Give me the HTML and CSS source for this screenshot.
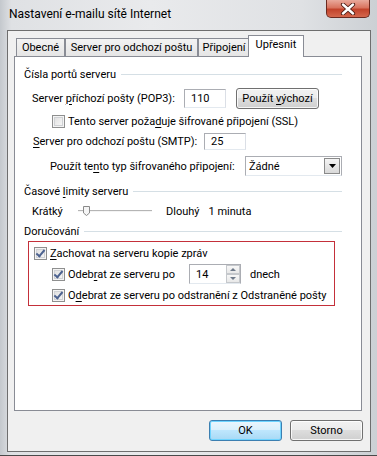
FILE: index.html
```html
<!DOCTYPE html>
<html lang="cs">
<head>
    <meta charset="UTF-8" />
    <title>Nastavení e-mailu sítě Internet</title>
    <link rel="stylesheet" href="styles.css">
</head>
<body>
    <div class="window">
        <div class="titlebar">
            <span class="title">Nastavení e-mailu sítě Internet</span>
            <span class="close">
                <svg width="16" height="12" viewBox="0 0 16 12">
                    <path d="M3 1.5 L13 10.5 M13 1.5 L3 10.5" stroke="#4a1a12" stroke-width="4.2" stroke-linecap="round" />
                    <path d="M3 1.5 L13 10.5 M13 1.5 L3 10.5" stroke="#ffffff" stroke-width="2.4" stroke-linecap="round" />
                </svg>
            </span>
        </div>

        <div class="client">
            <div class="tabs">
                <span class="tab t1">Obecné</span>
                <span class="tab t2">Server pro odchozí poštu</span>
                <span class="tab t3">Připojení</span>
                <span class="tab active">Upřesnit</span>
            </div>

            <div class="panel">
                <div class="group-head"><span>Čísla portů serveru</span></div>

                <div class="row pop3">
                    <span class="label w-pop3">Server <u>p</u>říchozí pošty (POP3):</span>
                    <span class="field f-pop3">110</span>
                    <span class="btn"><span>Použít <u>v</u>ýchozí</span></span>
                </div>

                <div class="row ssl">
                    <span class="check"></span>
                    <span>Tento server poža<u>d</u>uje šifrované připojení (SSL)</span>
                </div>

                <div class="row smtp">
                    <span class="label w-smtp"><u>S</u>erver pro odchozí poštu (SMTP):</span>
                    <span class="field f-smtp">25</span>
                </div>

                <div class="row enc">
                    <span class="label w-enc">Použít te<u>n</u>to typ šifrovaného připojení:</span>
                    <span class="select">
                        <span class="select-text">Žádné</span>
                        <span class="drop">
                            <svg width="7" height="4" viewBox="0 0 7 4"><path d="M0 0 H7 L3.5 4 Z" fill="#000" /></svg>
                        </span>
                    </span>
                </div>

                <div class="group-head head2"><span>Časové <u>l</u>imity serveru</span></div>

                <div class="row slider-row">
                    <span class="label w-short">Krátký</span>
                    <svg class="slider" width="74" height="12" viewBox="0 0 74 12">
                        <line x1="0" y1="5.5" x2="74" y2="5.5" stroke="#b5b5b5" />
                        <line x1="0" y1="6.5" x2="74" y2="6.5" stroke="#f4f4f4" />
                        <path d="M5.5 1.5 H11.5 V8 L8.5 10.5 L5.5 8 Z" fill="#f5f5f5" stroke="#8a8a8a" />
                    </svg>
                    <span class="long">Dlouhý</span>
                    <span class="minute">1 minuta</span>
                </div>

                <div class="group-head head3"><span>Doručování</span></div>

                <div class="highlight">
                    <div class="row keep">
                        <span class="check on"></span>
                        <span><u>Z</u>achovat na serveru kopie zpráv</span>
                    </div>
                    <div class="row days">
                        <span class="check on"></span>
                        <span class="w-days">Odeb<u>r</u>at ze serveru po</span>
                        <span class="spin">
                            <span class="spin-text">14</span>
                            <span class="spin-btns">
                                <span class="arrow up"></span>
                                <span class="arrow down"></span>
                            </span>
                        </span>
                        <span class="unit">dnech</span>
                    </div>
                    <div class="row deleted">
                        <span class="check on"></span>
                        <span>O<u>d</u>ebrat ze serveru po odstranění z Odstraněné pošty</span>
                    </div>
                </div>
            </div>

            <div class="buttons">
                <span class="btn default">OK</span>
                <span class="btn">Storno</span>
            </div>
        </div>
    </div>
</body>
</html>
```

FILE: styles.css
```css
body {
    margin: 0;
    font-family: Roboto, "Liberation Sans", sans-serif;
    font-size: 11px;
    color: #000;
    white-space: nowrap;
}
u {
    text-decoration-thickness: 1px;
    text-underline-offset: 2px;
}
.window {
    width: 377px;
    height: 456px;
    box-sizing: border-box;
    padding: 0 6px 3px 7px;
    background: linear-gradient(90deg, #c4c8cd 0%, #dfe1e4 3%, #e9eaec 40%, #dfe1e4 80%, #ccd0d4 100%);
    border-bottom: 1px solid #4a4a4a;
    display: flex;
    flex-direction: column;
}
.titlebar {
    height: 30px;
    display: flex;
    justify-content: space-between;
    align-items: flex-start;
}
.title {
    margin-top: 7px;
    margin-left: 2px;
    font-size: 12px;
}
.close {
    width: 44px;
    height: 18px;
    margin-right: 1px;
    box-sizing: border-box;
    border: 1px solid #6b2a20;
    border-top: none;
    border-radius: 0 0 5px 5px;
    background: linear-gradient(#e9a99b 0%, #d9745f 45%, #c2432b 55%, #d4674d 100%);
    display: flex;
    justify-content: center;
    align-items: center;
}
.client {
    flex: 1;
    border: 1px solid #6e6e6e;
    background: #f0f0f0;
    padding: 4px 8px 0 6px;
}
.tabs {
    display: flex;
    align-items: flex-end;
    height: 21px;
    padding-left: 2px;
    position: relative;
    z-index: 1;
}
.tab {
    height: 18px;
    box-sizing: border-box;
    border: 1px solid #898c95;
    border-bottom: none;
    background: linear-gradient(#f3f3f3, #e5e5e5);
    text-align: center;
    line-height: 17px;
}
.t1 { width: 49px; }
.t2 { width: 133px; }
.t3 { width: 52px; }
.tab.active {
    width: 56px;
    height: 22px;
    margin-left: -2px;
    margin-bottom: -1px;
    background: #fff;
    line-height: 18px;
}
.panel {
    height: 355px;
    box-sizing: border-box;
    border: 1px solid #898c95;
    background: #fff;
    padding: 9px 19px 0 9px;
}
.group-head {
    height: 16px;
    display: flex;
    align-items: center;
}
.group-head::after {
    content: "";
    flex: 1;
    height: 1px;
    margin-left: 5px;
    background: #d5dfe5;
}
.head2 { margin-top: 7px; }
.head3 { margin-top: 4px; }
.row {
    display: flex;
    align-items: center;
}
.label {
    flex: none;
}
.pop3 {
    height: 22px;
    margin-top: 5px;
    padding-left: 8px;
}
.w-pop3 { width: 152px; }
.field {
    box-sizing: border-box;
    width: 42px;
    height: 19px;
    border: 1px solid #abadb3;
    border-right-color: #dbdfe6;
    border-bottom-color: #e3e9ef;
    padding-left: 6px;
    line-height: 17px;
    background: #fff;
}
.btn {
    box-sizing: border-box;
    height: 21px;
    border: 1px solid #707070;
    border-radius: 3px;
    background: linear-gradient(#f2f2f2 0%, #ebebeb 49%, #dddddd 50%, #cfcfcf 100%);
    box-shadow: inset 0 0 0 1px rgba(255, 255, 255, 0.8);
    display: flex;
    justify-content: center;
    align-items: center;
}
.pop3 .btn {
    width: 83px;
    margin-left: 10px;
}
.ssl {
    height: 14px;
    margin-top: 5px;
    padding-left: 28px;
}
.check {
    flex: none;
    width: 13px;
    height: 13px;
    box-sizing: border-box;
    border: 1px solid #8e8f8f;
    background: linear-gradient(135deg, #dcdcdc, #fbfbfb);
    box-shadow: inset 0 0 0 1px #f4f4f4, inset 0 0 0 2px #cfd1d4;
    margin-right: 3px;
    position: relative;
}
.check.on::after {
    content: "";
    position: absolute;
    left: 3px;
    top: 0px;
    width: 3px;
    height: 7px;
    border: solid #4d6390;
    border-width: 0 2px 2px 0;
    transform: rotate(40deg);
}
.smtp {
    height: 18px;
    margin-top: 4px;
    padding-left: 9px;
}
.w-smtp { width: 171px; }
.f-smtp {
    height: 17px;
    line-height: 15px;
}
.enc {
    height: 20px;
    margin-top: 6px;
    padding-left: 26px;
}
.w-enc { width: 195px; }
.select {
    width: 97px;
    height: 20px;
    box-sizing: border-box;
    border: 1px solid #abadb3;
    border-bottom-color: #e3e9ef;
    background: #fff;
    display: flex;
    align-items: center;
    padding: 0 1px 0 3px;
}
.select-text {
    flex: 1;
}
.drop {
    width: 16px;
    height: 16px;
    box-sizing: border-box;
    border: 1px solid #8a8a8a;
    background: linear-gradient(#f4f4f4, #d9d9d9);
    display: flex;
    justify-content: center;
    align-items: center;
}
.slider-row {
    height: 16px;
    margin-top: 4px;
    padding-left: 8px;
}
.w-short { width: 46px; }
.slider { flex: none; }
.long { margin-left: 14px; }
.minute { margin-left: 9px; }
.highlight {
    margin-top: 2px;
    margin-left: 4px;
    width: 307px;
    height: 65px;
    box-sizing: border-box;
    border: 1px solid #c4303a;
    padding: 4px 0 0 5px;
}
.keep { height: 14px; }
.days {
    height: 20px;
    margin-top: 4px;
    padding-left: 18px;
}
.w-days { width: 121px; }
.spin {
    width: 52px;
    height: 20px;
    box-sizing: border-box;
    border: 1px solid #abadb3;
    border-bottom-color: #e3e9ef;
    display: flex;
    align-items: center;
    padding-left: 6px;
}
.spin-text { flex: 1; }
.spin-btns {
    width: 14px;
    height: 18px;
    display: flex;
    flex-direction: column;
}
.arrow {
    flex: 1;
    border: 1px solid #c5c8cc;
    background: linear-gradient(#f7f7f7, #e8e8e8);
    position: relative;
}
.arrow::after {
    content: "";
    position: absolute;
    left: 3px;
    top: 2px;
    border-left: 3px solid transparent;
    border-right: 3px solid transparent;
}
.up::after { border-bottom: 3px solid #6f7a8a; }
.down::after { border-top: 3px solid #6f7a8a; }
.unit { margin-left: 9px; }
.deleted {
    height: 14px;
    margin-top: 4px;
    padding-left: 18px;
}
.buttons {
    display: flex;
    justify-content: flex-end;
    gap: 8px;
    margin-top: 9px;
    margin-right: -1px;
}
.buttons .btn {
    width: 73px;
}
.btn.default {
    border-color: #3c7fb1;
    background: linear-gradient(#eaf6fd 0%, #d9f0fc 49%, #bee6fd 50%, #a7d9f5 100%);
    box-shadow: inset 0 0 0 1px #6ed4ff;
}
```
